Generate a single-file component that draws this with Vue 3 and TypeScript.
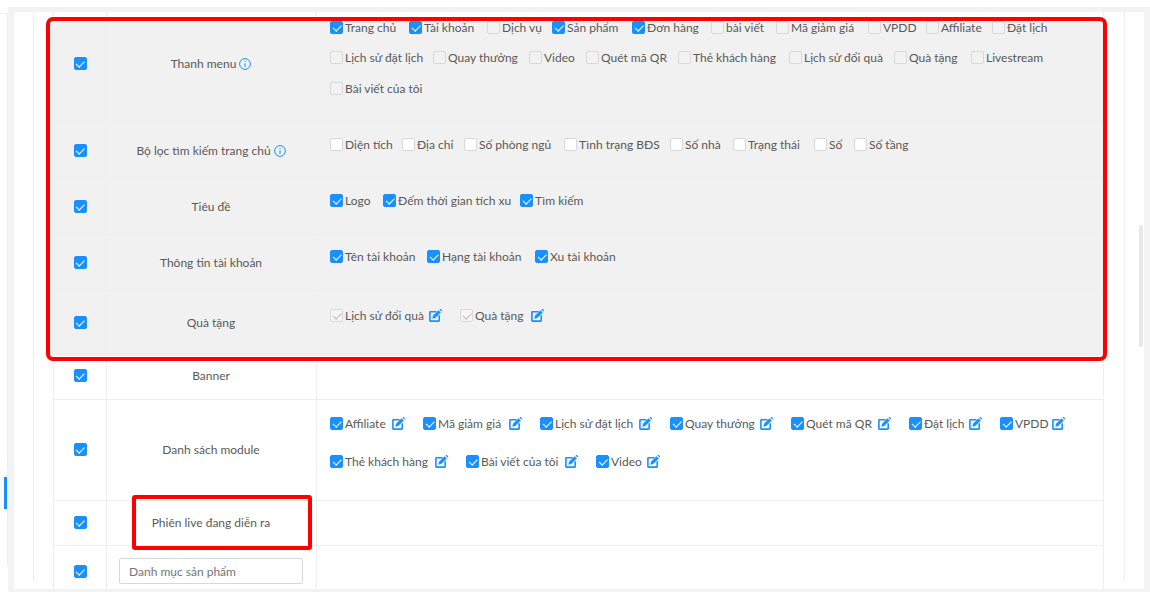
<script setup lang="ts">
type State = 'on' | 'off' | 'muted' | 'lock'
type Opt = { label: string; width: number; state: State; edit?: boolean }
type Row = { key: string; title: string; info?: boolean; input?: boolean; height: number; pad?: number; nudge?: number; marked?: boolean; tall?: boolean; opts: Opt[] }
type Pair = [string, number, State?]

const list = (pairs: Pair[], state: State, edit = false): Opt[] =>
  pairs.map(([label, width, own]) => ({ label, width, state: own ?? state, edit }))

const rows: Row[] = [
  {
    key: 'menu', title: 'Thanh menu', info: true, height: 118, pad: 8, nudge: 1, marked: true,
    opts: list([
      ['Trang chủ', 79, 'on'], ['Tài khoản', 78, 'on'], ['Dịch vụ', 65], ['Sản phẩm', 80, 'on'], ['Đơn hàng', 79, 'on'],
      ['bài viết', 65], ['Mã giảm giá', 92], ['VPDD', 58], ['Affiliate', 66], ['Đặt lịch', 70],
      ['Lịch sử đặt lịch', 103], ['Quay thưởng', 96], ['Video', 57], ['Quét mã QR', 92], ['Thẻ khách hàng', 111],
      ['Lịch sử đổi quà', 105], ['Quà tặng', 77], ['Livestream', 80], ['Bài viết của tôi', 103]
    ], 'muted')
  },
  {
    key: 'filter', title: 'Bộ lọc tìm kiếm trang chủ', info: true, height: 56, pad: 7, nudge: 1, marked: true,
    opts: list([['Diện tích', 72], ['Địa chỉ', 62], ['Số phòng ngủ', 100], ['Tình trạng BĐS', 106], ['Số nhà', 63], ['Trạng thái', 81], ['Số', 40], ['Số tầng', 60]], 'off')
  },
  { key: 'title', title: 'Tiêu đề', height: 57, pad: 7, marked: true, opts: list([['Logo', 53], ['Đếm thời gian tích xu', 137], ['Tìm kiếm', 70]], 'on') },
  { key: 'account', title: 'Thông tin tài khoản', height: 56, pad: 6, marked: true, opts: list([['Tên tài khoản', 97], ['Hạng tài khoản', 108], ['Xu tài khoản', 90]], 'on') },
  { key: 'gift', title: 'Quà tặng', height: 63, pad: 9, marked: true, opts: list([['Lịch sử đổi quà', 130], ['Quà tặng', 102]], 'lock', true) },
  { key: 'banner', title: 'Banner', height: 46, nudge: -1, opts: [] },
  {
    key: 'module', title: 'Danh sách module', height: 101, pad: 4, nudge: -1, tall: true,
    opts: list([
      ['Affiliate', 93], ['Mã giảm giá', 117], ['Lịch sử đặt lịch', 130], ['Quay thưởng', 121], ['Quét mã QR', 118], ['Đặt lịch', 91], ['VPDD', 83],
      ['Thẻ khách hàng', 136], ['Bài viết của tôi', 130], ['Video', 82]
    ], 'on', true)
  },
  { key: 'live', title: 'Phiên live đang diễn ra', height: 45, nudge: -1, opts: [] },
  { key: 'cat', title: '', input: true, height: 53, nudge: -1, opts: [] }
]

const nudged = (n = 0) => ({
  paddingTop: Math.max(n, 0) * 2 + 'px',
  paddingBottom: Math.max(-n, 0) * 2 + 'px'
})
</script>

<template>
  <div class="page">
    <aside class="side">
      <div class="side-rail"><span class="side-mark"></span></div>
    </aside>
    <main class="main">
      <div class="top-band"></div>
      <div class="frame">
        <section class="panel">
          <div class="sheet">
            <div class="table">
              <div
                v-for="row in rows"
                :key="row.key"
                class="row"
                :class="{ marked: row.marked }"
                :style="{ height: row.height + 'px' }"
              >
                <div class="cell cell-check" :style="nudged(row.nudge)"><span class="cb on"></span></div>
                <div class="cell cell-title" :style="nudged(row.nudge)">
                  <input v-if="row.input" class="name-input" placeholder="Danh mục sản phẩm" readonly />
                  <template v-else>
                    <span>{{ row.title }}</span>
                    <svg v-if="row.info" class="info" viewBox="0 0 12 12" width="12" height="12" aria-hidden="true">
                      <circle cx="6" cy="6" r="5.4" fill="none" stroke="#1890ff" stroke-width="1" />
                      <path d="M6 5.2V9M6 3v1" fill="none" stroke="#1890ff" stroke-width="1" />
                    </svg>
                  </template>
                </div>
                <div class="cell cell-opts" :class="{ tall: row.tall }" :style="{ paddingTop: (row.pad ?? 0) + 'px' }">
                  <div v-for="opt in row.opts" :key="opt.label" class="opt" :style="{ width: opt.width + 'px' }">
                    <span class="cb" :class="opt.state"></span>
                    <span class="opt-label">{{ opt.label }}</span>
                    <svg v-if="opt.edit" class="edit" viewBox="0 0 13 13" width="13" height="13" aria-hidden="true">
                      <path d="M7.6 2.8H1.4a.5.5 0 0 0-.5.5v8.3c0 .3.2.5.5.5h8.3c.3 0 .5-.2.5-.5V6.2" fill="none" stroke="#1890ff" stroke-width="1.6" />
                      <path d="M4 6.8 9.6 1.2l2.2 2.2-5.6 5.6-2.9.7z" fill="#1890ff" />
                      <path d="M10.5.4 11 0a.6.6 0 0 1 .8 0l1.1 1.1a.6.6 0 0 1 0 .8l-.5.5z" fill="#1890ff" />
                    </svg>
                  </div>
                </div>
              </div>
            </div>
          </div>
        </section>
      </div>
    </main>
    <div class="mark-fill"></div>
    <div class="mark mark-main"></div>
    <div class="mark mark-live"></div>
    <div class="scroll-thumb"></div>
  </div>
</template>

<style>
html, body { margin: 0; padding: 0; background: #fff; }
</style>

<style scoped>
.page {
  position: relative;
  display: flex;
  width: 1150px;
  height: 592px;
  overflow: hidden;
  background: #fff;
  font-family: "Lato", "Noto Sans", sans-serif;
  font-size: 12px;
  color: #595959;
}
.side { width: 8px; flex: none; background: #fff; }
.side-rail {
  box-sizing: border-box;
  height: 553px;
  margin-top: 13px;
  padding-top: 463px;
  border-top: 1px solid #eee;
  border-right: 1px solid #eee;
}
.side-mark { display: block; width: 3px; height: 32px; margin-left: 4px; background: #1890ff; }
.main { flex: 1; min-width: 0; display: flex; flex-direction: column; }
.top-band { height: 7px; flex: none; background: #fff; }
.frame { flex: 1; min-height: 0; padding: 5px 6px 3px; background: #f3f3f3; }
.panel { height: 100%; overflow: hidden; background: #fff; }
.sheet {
  box-sizing: border-box;
  width: 1092px;
  height: 100%;
  margin-left: 19px;
  padding: 0 20px 0 19px;
  border-left: 1px solid #eee;
  border-right: 1px solid #eee;
}
.table { position: relative; z-index: 2; margin-top: -8px; }
.row {
  --line: #eee;
  box-sizing: border-box;
  display: grid;
  grid-template-columns: 53px 210px 1fr;
  border: solid var(--line);
  border-width: 0 1px 1px;
}
.row.marked { --line: #efefef; }
.cell { box-sizing: border-box; }
.cell-check { display: flex; align-items: center; justify-content: center; border-right: 1px solid var(--line); }
.cell-title {
  display: flex;
  align-items: center;
  justify-content: center;
  gap: 3px;
  padding-right: 1px;
  border-right: 1px solid var(--line);
}
.cell-opts {
  display: flex;
  flex-wrap: wrap;
  align-content: flex-start;
  padding-left: 13px;
}
.opt { display: flex; align-items: center; height: 30.5px; gap: 2px; }
.tall .opt { height: 38px; }
.opt-label { white-space: nowrap; }
.edit { display: block; flex: none; margin: 1px 18px 0 auto; }
.info { display: block; margin-top: 1px; }
.cb {
  position: relative;
  box-sizing: border-box;
  display: block;
  flex: none;
  width: 13px;
  height: 13px;
  border: 1px solid #d9d9d9;
  border-radius: 2px;
  background: #fff;
}
.cb.muted { background: #f2f2f2; }
.cb.lock { background: #f5f5f5; }
.cb.on { background: #1890ff; border-color: #1890ff; }
.cb.on::after, .cb.lock::after {
  content: "";
  position: absolute;
  left: 3.5px;
  top: 1px;
  width: 3.5px;
  height: 6.5px;
  border: solid #fff;
  border-width: 0 1px 1px 0;
  transform: rotate(45deg);
}
.cb.lock::after { border-color: #bdbdbd; }
.name-input {
  box-sizing: border-box;
  width: 184px;
  height: 26px;
  padding: 0 9px;
  border: 1px solid #d9d9d9;
  border-radius: 2px;
  outline: none;
  font: inherit;
  color: #595959;
  background: #fff;
}
.name-input::placeholder { color: #757575; opacity: 1; }
.mark-fill {
  position: absolute;
  z-index: 1;
  left: 50px;
  top: 21px;
  width: 1053px;
  height: 335px;
  background: #f1f1f1;
}
.mark {
  position: absolute;
  z-index: 3;
  box-sizing: border-box;
  border: 4px solid #f00;
  pointer-events: none;
}
.mark-main { left: 46px; top: 17px; width: 1061px; height: 344px; border-radius: 7px; }
.mark-live { left: 132px; top: 495px; width: 180px; height: 55px; border-radius: 3px; }
.scroll-thumb {
  position: absolute;
  left: 1139px;
  top: 225px;
  width: 4px;
  height: 122px;
  border-radius: 2px;
  background: #e8e8e8;
}
</style>
